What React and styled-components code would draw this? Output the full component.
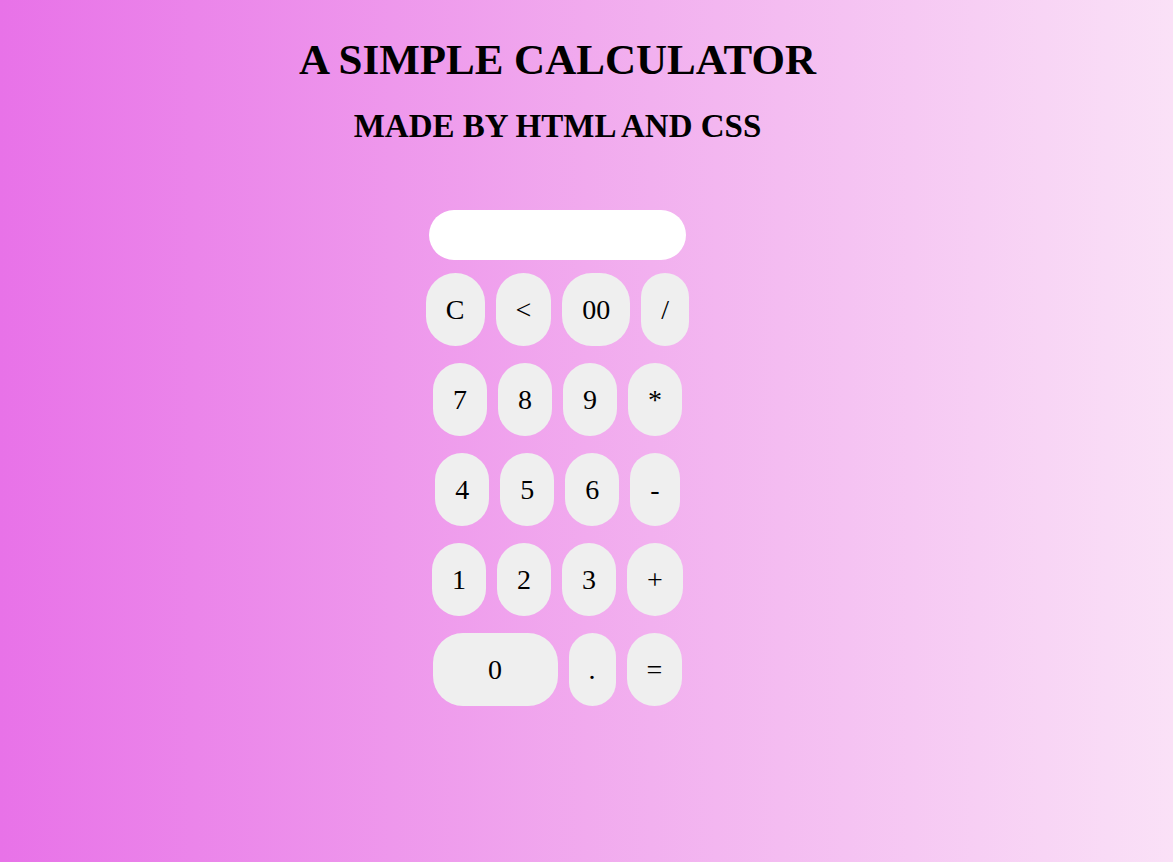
import React, { useState } from 'react'
import styled, { createGlobalStyle } from 'styled-components'

const GlobalStyle = createGlobalStyle`
  html, body {
    margin: 0;
    padding: 0;
  }
  body {
    font-family: "Liberation Serif", "Times New Roman", serif;
    min-height: 862px;
    background: linear-gradient(to right, #e872e8 0%, #f1aaee 50%, #fae1f7 100%);
  }
`

const Page = styled.div`
  display: flex;
  flex-direction: column;
  align-items: center;
  padding-right: 58px;
  padding-top: 37px;
  color: #000;
`

const Title = styled.h1`
  margin: 0;
  font-size: 43px;
  font-weight: bold;
  line-height: 46px;
`

const Subtitle = styled.h2`
  margin: 25px 0 0;
  font-size: 33px;
  font-weight: bold;
  line-height: 36px;
`

const Calculator = styled.div`
  margin-top: 66px;
  display: flex;
  flex-direction: column;
  align-items: center;
  gap: 17px;
`

const Display = styled.input`
  width: 257px;
  height: 50px;
  box-sizing: border-box;
  border: none;
  border-radius: 25px;
  background: #fff;
  padding: 0 20px;
  font-family: inherit;
  font-size: 24px;
  outline: none;
  margin-bottom: -4px;
`

const Row = styled.div`
  display: flex;
  justify-content: center;
  gap: 11px;
`

const Key = styled.button`
  height: 73px;
  min-width: ${p => (p.$wide ? '125px' : 'auto')};
  padding: 0 20px;
  border: none;
  border-radius: 30px;
  background: #efefef;
  color: #000;
  font-family: "Liberation Serif", "Times New Roman", serif;
  font-size: 28px;
  cursor: pointer;
`

const rows = [
  ['C', '<', '00', '/'],
  ['7', '8', '9', '*'],
  ['4', '5', '6', '-'],
  ['1', '2', '3', '+'],
  ['0', '.', '='],
]

export default function App() {
  const [value, setValue] = useState('')

  const press = (k) => {
    if (k === 'C') return setValue('')
    if (k === '<') return setValue(value.slice(0, -1))
    if (k === '=') {
      try {
        // eslint-disable-next-line no-new-func
        setValue(String(Function('return (' + value + ')')()))
      } catch (e) {
        setValue('Error')
      }
      return
    }
    setValue(value + k)
  }

  return (
    <>
      <GlobalStyle />
      <Page>
        <Title>A SIMPLE CALCULATOR</Title>
        <Subtitle>MADE BY HTML AND CSS</Subtitle>
        <Calculator>
          <Display type="text" value={value} readOnly />
          {rows.map((row, i) => (
            <Row key={i}>
              {row.map(k => (
                <Key key={k} $wide={k === '0'} onClick={() => press(k)}>{k}</Key>
              ))}
            </Row>
          ))}
        </Calculator>
      </Page>
    </>
  )
}
